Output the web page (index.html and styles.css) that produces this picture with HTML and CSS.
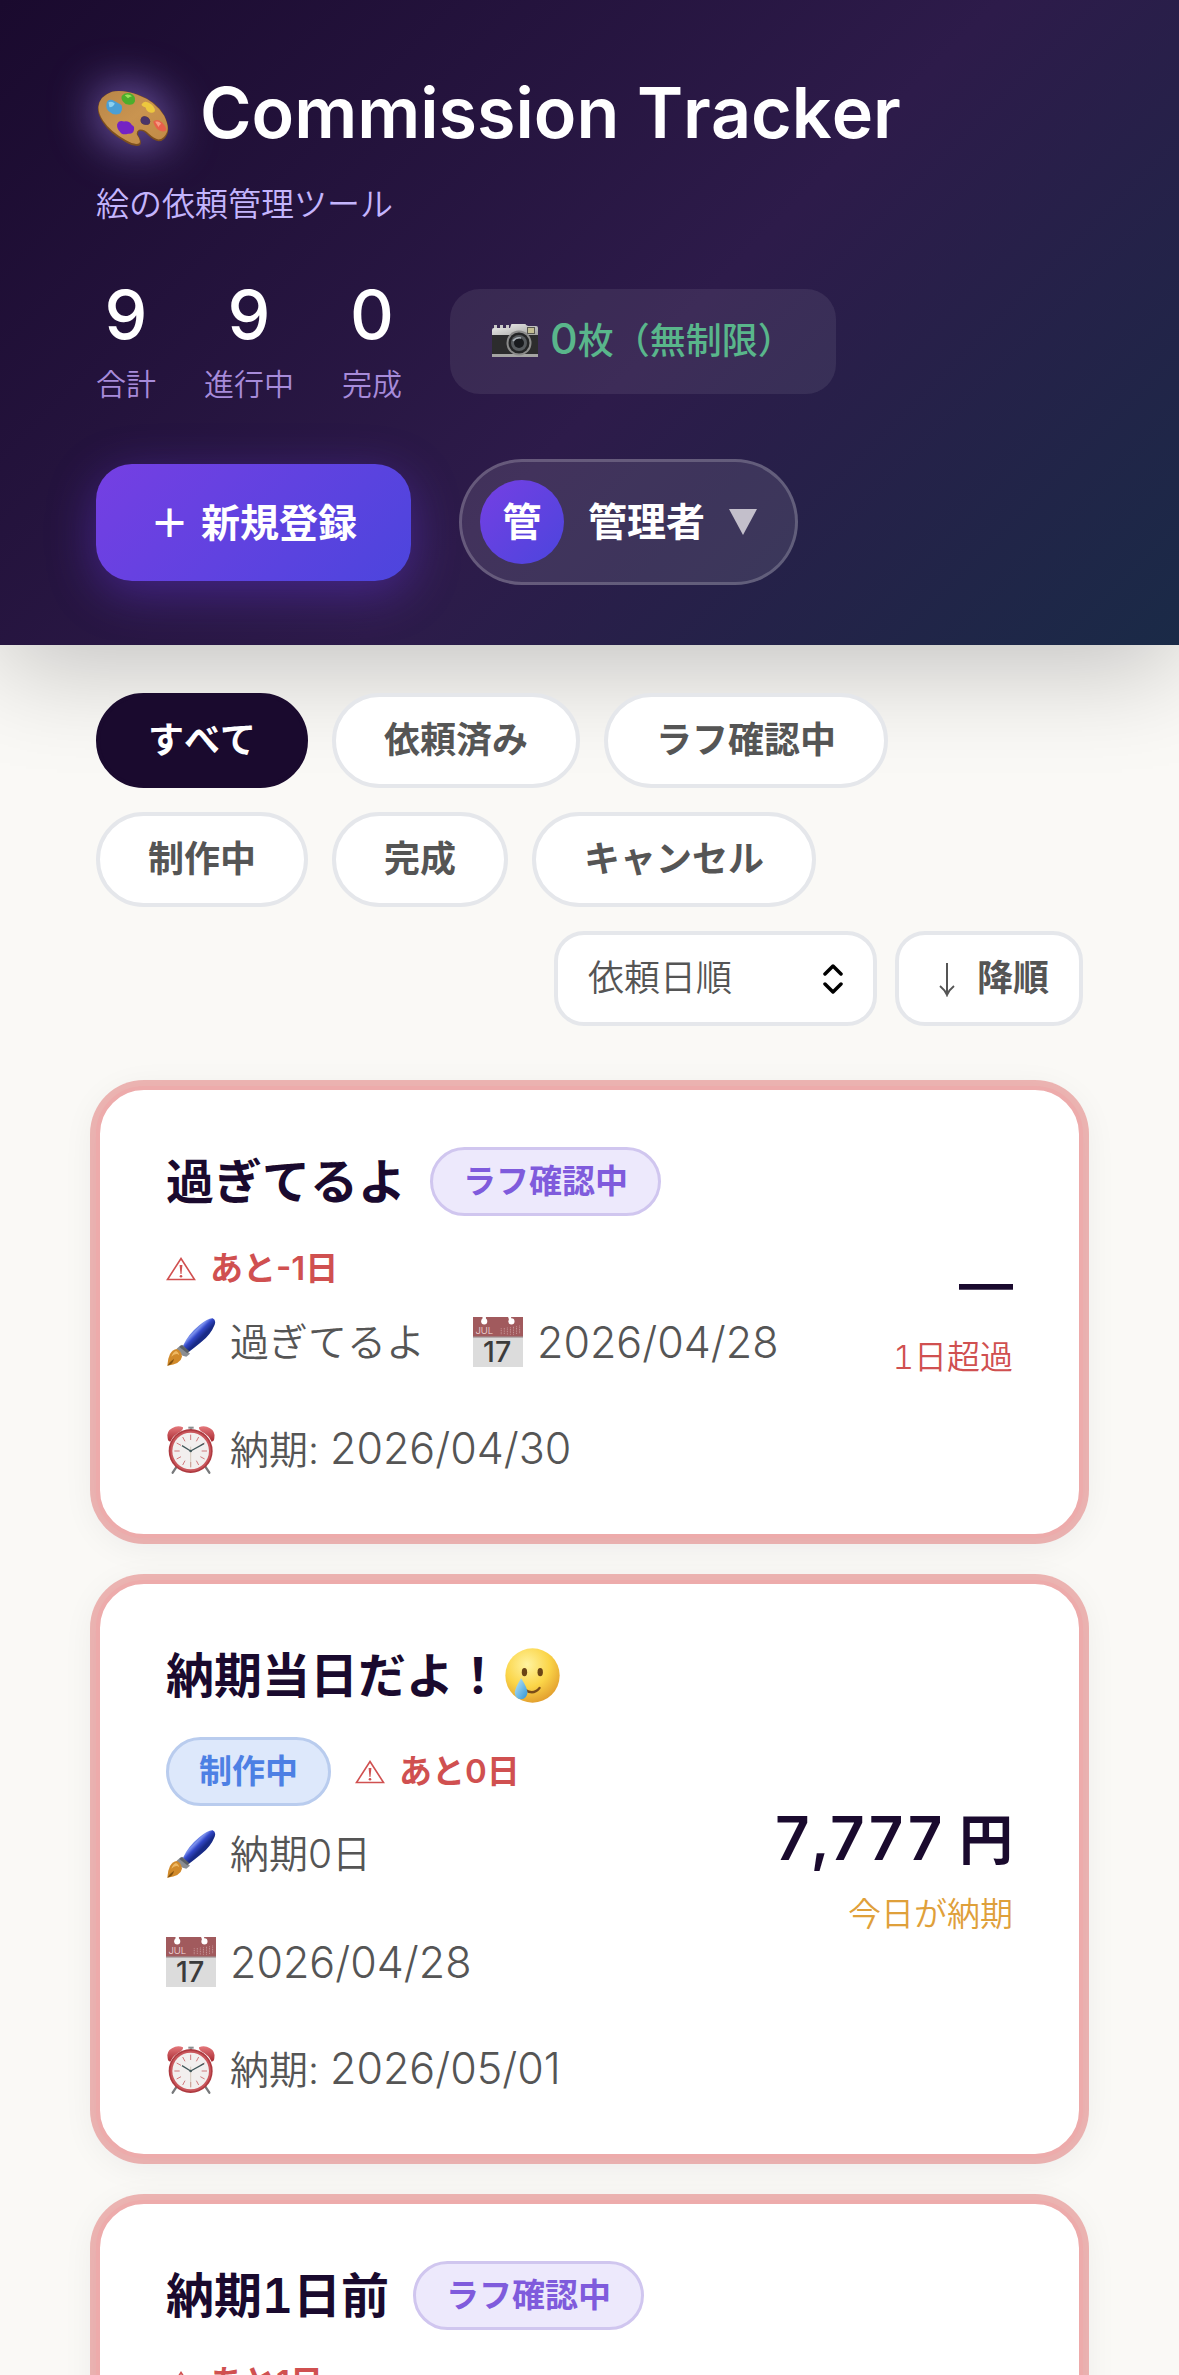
FILE: index.html
```html
<!DOCTYPE html>
<html lang="ja">
<head>
<meta charset="utf-8">
<meta name="viewport" content="width=device-width, initial-scale=1">
<title>Commission Tracker</title>
<link rel="stylesheet" href="styles.css">
</head>
<body>
<svg class="sprite" aria-hidden="true">
  <defs>
    <linearGradient id="handle" gradientUnits="userSpaceOnUse" x1="130" y1="262" x2="160" y2="292">
      <stop offset="0" stop-color="#1f3fb8"/><stop offset=".4" stop-color="#7d92ee"/><stop offset=".65" stop-color="#3247c8"/><stop offset="1" stop-color="#182a86"/>
    </linearGradient>
    <linearGradient id="bell" x1="0" y1="0" x2="0" y2="1">
      <stop offset="0" stop-color="#e4777b"/><stop offset="1" stop-color="#a82a31"/>
    </linearGradient>
    <linearGradient id="wood" x1="0" y1="0" x2="1" y2="1">
      <stop offset="0" stop-color="#b98648"/><stop offset=".5" stop-color="#c99450"/><stop offset="1" stop-color="#c08a45"/>
    </linearGradient>
    <linearGradient id="chrome" x1="0" y1="0" x2="1" y2="1">
      <stop offset="0" stop-color="#f2f2f0"/><stop offset="1" stop-color="#9a9a98"/>
    </linearGradient>
    <radialGradient id="face" cx=".4" cy=".3" r=".75">
      <stop offset="0" stop-color="#fff3a0"/><stop offset=".55" stop-color="#fbd548"/><stop offset="1" stop-color="#e09a2c"/>
    </radialGradient>
    <linearGradient id="tear" x1="0" y1="0" x2="1" y2="1">
      <stop offset="0" stop-color="#bfe9fb"/><stop offset="1" stop-color="#2f94d6"/>
    </linearGradient>
  </defs>
  <symbol id="i-brush" viewBox="50 235 150 150">
    <path d="M101 321Q118 286 150 260Q176 238 190 239Q201 244 196 258Q184 288 155 311Q132 330 118 340Z" fill="url(#handle)"/>
    <path d="M94 320L122 345L111 354Q100 352 90 345Q82 337 82 330Z" fill="#8a8d92"/>
    <path d="M98 318L120 338L114 344L90 325Z" fill="#5d6166"/>
    <path d="M82 331Q96 336 98 354Q94 376 54 381Q55 360 62 346Q70 333 82 331Z" fill="#d18a2a"/>
    <path d="M80 337Q70 341 66 354Q80 340 90 350Q86 338 80 337Z" fill="#eeb863"/>
    <path d="M54 381Q64 366 74 360Q72 376 54 381Z" fill="#86530f"/>
  </symbol>
  <symbol id="i-sheet" viewBox="0 0 147 147">
    <path d="M0 0H147V147H0Z" fill="#dcdcdc"/>
    <path d="M0 0H147V58H0Z" fill="#a15a5d"/>
    <path d="M0 57H147V60H0Z" fill="#8f7f80"/>
    <circle cx="33" cy="13" r="9" fill="#fff"/><path d="M28 0H38V10H28Z" fill="#fff"/>
    <circle cx="113" cy="13" r="9" fill="#fff"/><path d="M103 0H112V10H107Z" fill="#fff"/>
    <path d="M83 33V52M92 32V52M101 31V52M110 30V52M119 29V52M128 27V52M137 25V50" stroke="#c39294" stroke-width="3" stroke-dasharray="3 2" fill="none"/>
  </symbol>
  <symbol id="i-clock" viewBox="50 560 150 150">
    <path d="M84 682L70 703M166 682L180 703" stroke="#77797b" stroke-width="7" stroke-linecap="round"/>
    <path d="M55 600Q50 580 68 570Q84 560 101 567Q103 574 95 579Q72 590 63 610Q56 610 55 600Z" fill="url(#bell)"/>
    <path d="M195 600Q199 580 182 570Q166 560 149 567Q147 574 155 579Q178 590 187 610Q194 610 195 600Z" fill="url(#bell)"/>
    <path d="M117 565H133V571H117Z" fill="#8b8d8f"/><path d="M122 570H128V577H122Z" fill="#8b8d8f"/>
    <circle cx="124" cy="638" r="66" fill="#ae3a40"/>
    <circle cx="124" cy="638" r="61" fill="#c9565b"/>
    <circle cx="124" cy="638" r="55" fill="#f2efee"/>
    <g stroke="#d0797c" stroke-width="3"><path d="M124 589V605M124 671V687M75 638H91M157 638H173M100 596L107 609M148 596L141 609M82 614L95 621M166 614L153 621M82 662L95 655M166 662L153 655M100 680L107 667M148 680L141 667"/></g>
    <path d="M124 686V625" stroke="#c8b7a6" stroke-width="2"/>
    <path d="M124 638L98 622M124 638L164 616" stroke="#41585a" stroke-width="4"/>
    <circle cx="124" cy="638" r="4" fill="#41585a"/>
  </symbol>
  <symbol id="i-warning" viewBox="0 0 30 24">
    <path d="M15 1.500L28.500 22.500H1.500Z" fill="none" stroke="currentColor" stroke-width="1.600"/>
    <path d="M13.600 8H16.400L15.500 17H14.500Z" fill="currentColor"/><circle cx="15" cy="19.300" r="1.300" fill="currentColor"/>
  </symbol>
</svg>

<header class="site-header">
  <h1 class="brand">
    <svg class="brand-icon" viewBox="80 85 222 175" aria-hidden="true">
      <path d="M85 142Q87 108 126 93Q160 86 204 101Q262 121 286 166Q302 200 295 220Q286 243 268 243Q252 240 236 224Q224 210 211 211Q204 214 206 224Q220 246 212 255Q196 261 168 245Q120 218 100 186Q84 162 85 142Z" fill="#7d4f1e"/>
      <path fill-rule="evenodd" d="M87 138Q89 107 128 93Q162 87 204 102Q260 122 285 166Q300 198 294 214Q285 237 268 237Q254 234 238 219Q224 205 209 208Q200 213 203 223Q216 241 210 249Q196 255 170 240Q122 213 101 181Q86 158 87 138ZM214 178Q213 191 228 193Q243 194 243 182Q240 169 226 167Q215 168 214 178Z" fill="url(#wood)"/>
      <path d="M214 178Q213 191 228 193Q243 194 243 182Q240 169 226 167Q215 168 214 178Z" fill="#4a3568"/>
      <path d="M157 106Q166 94 182 98Q200 104 197 122Q192 135 176 132Q168 132 163 125Q154 116 157 106Z" fill="#4cae2c"/>
      <path d="M166 104Q178 98 188 107Q180 108 176 113Z" fill="#9ae25a"/>
      <path d="M111 130Q113 115 129 118Q141 124 156 133Q162 146 152 159Q134 166 122 155Q108 146 111 130Z" fill="#4b9fd4"/>
      <path d="M117 125Q128 120 136 129Q132 140 120 140Z" fill="#8bd0f0"/>
      <path d="M217 131Q224 119 237 126Q258 136 257 152Q250 160 237 154Q230 148 229 141Q216 137 217 131Z" fill="#edc83e"/>
      <path d="M143 192Q148 178 164 183Q180 180 188 194Q196 196 194 208Q192 222 176 220Q158 226 151 213Q142 204 143 192Z" fill="#7423c4"/>
      <path d="M252 184Q262 172 278 185Q295 202 290 211Q280 216 268 209Q258 202 252 184Z" fill="#e8604b"/>
      <path d="M258 184Q268 180 276 190Q270 194 268 200Z" fill="#f79b84"/>
    </svg>
    <span>Commission Tracker</span>
  </h1>
  <p class="tagline">絵の依頼管理ツール</p>

  <div class="summary">
    <dl class="stats">
      <div class="stat"><dt>合計</dt><dd>9</dd></div>
      <div class="stat"><dt>進行中</dt><dd>9</dd></div>
      <div class="stat"><dt>完成</dt><dd>0</dd></div>
    </dl>
    <p class="quota">
      <svg class="quota-icon" viewBox="0 0 46 34" aria-hidden="true">
        <path d="M2 1H5V5H2ZM8 1H11V5H8ZM14 1H17V5H14Z" fill="#c9c9c7"/>
        <path d="M19 1Q19 0 20 0H33Q34 0 34 1L36 2H44Q46 2 46 4V13H0V6Q0 4 2 4H18Z" fill="url(#chrome)"/>
        <path d="M0 11H46V31H0Z" fill="#2c2c2d"/><path d="M0 30H46V33H0Z" fill="#a5a5a3"/>
        <path d="M35 3H43V10H35Z" fill="#57564e"/><path d="M36 4H42V9H36Z" fill="#c3bd92"/>
        <circle cx="27" cy="19" r="12.500" fill="#8b8b8a"/><circle cx="27" cy="19" r="10.500" fill="#242526"/>
        <circle cx="27" cy="19" r="8" fill="#565a5d"/><circle cx="27" cy="19" r="5" fill="#191b1e"/>
        <path d="M21 17Q24 13 29 14" stroke="#a9b0b5" stroke-width="1.500" fill="none"/>
      </svg>
      <span><span class="num">0</span>枚（無制限）</span>
    </p>
  </div>

  <div class="actions">
    <button class="btn-new" type="button">＋<span>新規登録</span></button>
    <button class="user-menu" type="button" aria-haspopup="menu">
      <span class="avatar">管</span>
      <span>管理者</span>
      <svg class="caret" viewBox="0 0 28 26" aria-hidden="true"><path d="M0 0H28L14 26Z" fill="currentColor"/></svg>
    </button>
  </div>
</header>

<main class="content">
  <div class="toolbar">
    <div class="filters" role="group" aria-label="ステータス">
      <button class="filter is-active" type="button">すべて</button>
      <button class="filter" type="button">依頼済み</button>
      <button class="filter" type="button">ラフ確認中</button>
      <button class="filter" type="button">制作中</button>
      <button class="filter" type="button">完成</button>
      <button class="filter" type="button">キャンセル</button>
    </div>
    <div class="sorting">
      <div class="select-wrap">
        <select class="sort-select" aria-label="並び順">
          <option>依頼日順</option>
          <option>納期順</option>
          <option>金額順</option>
        </select>
        <svg class="select-icon" viewBox="0 0 22 30" aria-hidden="true"><path d="M3 10L11 2L19 10M3 20L11 28L19 20" fill="none" stroke="#000" stroke-width="3.500" stroke-linecap="round" stroke-linejoin="round"/></svg>
      </div>
      <button class="sort-dir" type="button">
        <svg class="sort-arrow" viewBox="0 0 36 36" aria-hidden="true"><path d="M18 2V33M11 25Q16 29 18 34Q20 29 25 25" fill="none" stroke="currentColor" stroke-width="2"/></svg>
        降順
      </button>
    </div>
  </div>

  <div class="cards">
    <article class="card">
      <div class="card-main">
        <div class="card-head">
          <h2 class="card-title">過ぎてるよ</h2>
          <span class="badge badge-rough">ラフ確認中</span>
          <span class="deadline"><svg class="warn" aria-hidden="true"><use href="#i-warning"/></svg>あと-1日</span>
        </div>
        <ul class="meta">
          <li><svg class="meta-icon" aria-hidden="true"><use href="#i-brush"/></svg><span>過ぎてるよ</span></li>
          <li><svg class="meta-icon" viewBox="0 0 147 147" aria-hidden="true"><use href="#i-sheet"/><text class="cal-month" x="7" y="50">JUL</text><text class="cal-day" x="71" y="132">17</text></svg><time class="num" datetime="2026-04-28">2026/04/28</time></li>
          <li><svg class="meta-icon" aria-hidden="true"><use href="#i-clock"/></svg><span>納期: <time class="num" datetime="2026-04-30">2026/04/30</time></span></li>
        </ul>
      </div>
      <div class="card-side">
        <p class="amount">—</p>
        <p class="remain remain-over">1日超過</p>
      </div>
    </article>

    <article class="card">
      <div class="card-main">
        <div class="card-head">
          <h2 class="card-title">納期当日だよ！<svg class="face" viewBox="1067 31 164 164" aria-hidden="true">
            <circle cx="1149" cy="113" r="81" fill="url(#face)"/>
            <ellipse cx="1125" cy="103" rx="8" ry="12" fill="#6b4416"/><ellipse cx="1172" cy="103" rx="8" ry="12" fill="#6b4416"/>
            <path d="M1128 156Q1152 172 1170 150" fill="none" stroke="#7a4c18" stroke-width="7" stroke-linecap="round"/>
            <path d="M1115 121Q1134 150 1134 164Q1132 183 1115 184Q1097 183 1096 164Q1097 150 1115 121Z" fill="url(#tear)"/>
          </svg></h2>
          <span class="badge badge-work">制作中</span>
          <span class="deadline"><svg class="warn" aria-hidden="true"><use href="#i-warning"/></svg>あと0日</span>
        </div>
        <ul class="meta">
          <li><svg class="meta-icon" aria-hidden="true"><use href="#i-brush"/></svg><span>納期0日</span></li>
          <li><svg class="meta-icon" viewBox="0 0 147 147" aria-hidden="true"><use href="#i-sheet"/><text class="cal-month" x="7" y="50">JUL</text><text class="cal-day" x="71" y="132">17</text></svg><time class="num" datetime="2026-04-28">2026/04/28</time></li>
          <li><svg class="meta-icon" aria-hidden="true"><use href="#i-clock"/></svg><span>納期: <time class="num" datetime="2026-05-01">2026/05/01</time></span></li>
        </ul>
      </div>
      <div class="card-side">
        <p class="amount"><span class="figure">7,777</span> 円</p>
        <p class="remain remain-today">今日が納期</p>
      </div>
    </article>

    <article class="card">
      <div class="card-main">
        <div class="card-head">
          <h2 class="card-title">納期1日前</h2>
          <span class="badge badge-rough">ラフ確認中</span>
          <span class="deadline"><svg class="warn" aria-hidden="true"><use href="#i-warning"/></svg>あと1日</span>
        </div>
        <ul class="meta">
          <li><svg class="meta-icon" aria-hidden="true"><use href="#i-brush"/></svg><span>納期1日前</span></li>
          <li><svg class="meta-icon" viewBox="0 0 147 147" aria-hidden="true"><use href="#i-sheet"/><text class="cal-month" x="7" y="50">JUL</text><text class="cal-day" x="71" y="132">17</text></svg><time class="num" datetime="2026-04-28">2026/04/28</time></li>
          <li><svg class="meta-icon" aria-hidden="true"><use href="#i-clock"/></svg><span>納期: <time class="num" datetime="2026-05-02">2026/05/02</time></span></li>
        </ul>
      </div>
      <div class="card-side">
        <p class="amount"><span class="figure">7,777</span> 円</p>
        <p class="remain remain-today">あと1日</p>
      </div>
    </article>
  </div>
</main>
</body>
</html>
```

FILE: styles.css
```css
* {
  box-sizing: border-box;
}

html {
  scrollbar-width: none;
}

body {
  margin: 0;
  background: #faf9f6;
  color: #555;
  font-family: "Inter", "Noto Sans CJK JP", sans-serif;
  font-size: 39px;
  font-weight: 350;
  line-height: 60px;
  font-kerning: none;
}

h1, h2, p, ul, dl, dd {
  margin: 0;
  padding: 0;
}

ul {
  list-style: none;
}

button, select {
  margin: 0;
  font: inherit;
  font-kerning: none;
  color: inherit;
  cursor: pointer;
}

.sprite {
  position: absolute;
  width: 0;
  height: 0;
}

/* Header */

.site-header {
  position: relative;
  padding: 62px 96px 60px;
  background: linear-gradient(135deg, #1a0a2e 0%, #2d1b4a 55%, #1a2a47 100%);
  box-shadow: 0 24px 96px rgba(0, 0, 0, 0.22);
  color: #fff;
}

.brand {
  display: flex;
  align-items: center;
  gap: 30px;
  font-size: 70px;
  font-weight: 600;
  line-height: 102px;
}

.brand-icon {
  flex: none;
  width: 74px;
  height: 58px;
  margin-top: 10px;
  filter: drop-shadow(0 0 24px rgba(167, 139, 250, 0.8));
}

.tagline {
  margin-top: 15px;
  color: #c4b5fd;
  font-size: 33px;
  line-height: 51px;
}

.summary {
  display: flex;
  flex-wrap: wrap;
  align-items: center;
  gap: 48px;
  margin-top: 45px;
}

.stats {
  display: flex;
  gap: 48px;
}

.stat {
  display: flex;
  flex-direction: column-reverse;
  gap: 9px;
  text-align: center;
}

.stat dd {
  font-size: 68px;
  font-weight: 500;
  line-height: 78px;
}

.stat dt {
  color: #a78bda;
  font-size: 30px;
  line-height: 45px;
}

.quota {
  display: flex;
  align-items: center;
  gap: 12px;
  padding: 24px 42px;
  border-radius: 30px;
  background: rgba(255, 255, 255, 0.08);
  color: #59b68b;
  font-size: 36px;
  font-weight: 500;
  line-height: 57px;
}

.quota-icon {
  width: 46px;
  height: 34px;
}

.actions {
  display: flex;
  flex-wrap: wrap;
  align-items: center;
  gap: 48px;
  margin-top: 52px;
}

.btn-new {
  display: flex;
  gap: 12px;
  padding: 30px 54px;
  border: 0;
  border-radius: 36px;
  background: linear-gradient(135deg, #753fe3 0%, #4c45dd 100%);
  box-shadow: 0 12px 48px rgba(109, 58, 237, 0.4);
  color: #fff;
  font-weight: 700;
  line-height: 57px;
}

.user-menu {
  display: flex;
  align-items: center;
  gap: 24px;
  padding: 18px 38px 18px 18px;
  border: 3px solid rgba(255, 255, 255, 0.2);
  border-radius: 64px;
  background: rgba(255, 255, 255, 0.1);
  color: #fff;
  font-weight: 700;
}

.avatar {
  width: 84px;
  height: 84px;
  border-radius: 50%;
  background: linear-gradient(135deg, #753fe3 0%, #4c45dd 100%);
  line-height: 84px;
  text-align: center;
}

.caret {
  width: 28px;
  height: 26px;
  color: #c3bfcb;
}

/* Filters and sorting */

.content {
  padding: 48px 96px;
}

.toolbar {
  display: flex;
  flex-wrap: wrap;
  justify-content: flex-end;
  gap: 24px;
  position: relative;
  font-size: 36px;
  line-height: 57px;
}

.filters {
  display: flex;
  flex: 1 1 100%;
  flex-wrap: wrap;
  gap: 24px;
}

.filter {
  padding: 15px 48px;
  border: 4px solid #e5e7eb;
  border-radius: 48px;
  background: #fff;
  font-weight: 600;
}

.filter.is-active {
  border-color: #1a0a2e;
  background: #1a0a2e;
  color: #fff;
}

.sorting {
  display: flex;
  gap: 18px;
}

.select-wrap {
  position: relative;
}

.sort-select {
  width: 323px;
  padding: 15px 30px;
  border: 4px solid #e5e7eb;
  border-radius: 30px;
  background: #fff;
  appearance: none;
}

.select-icon {
  position: absolute;
  top: 33px;
  right: 33px;
  width: 22px;
  height: 30px;
  pointer-events: none;
}

.sort-dir {
  display: flex;
  align-items: center;
  gap: 12px;
  padding: 15px 30px;
  border: 4px solid #e5e7eb;
  border-radius: 30px;
  background: #fff;
  font-weight: 600;
}

.sort-arrow {
  width: 36px;
  height: 36px;
}

/* Commission cards */

.cards {
  display: grid;
  gap: 42px;
  margin-top: 60px;
}

.card {
  display: flex;
  align-items: center;
  gap: 60px;
  padding: 54px 66px;
  border: 4px solid #edabab;
  border-radius: 48px;
  background: #fff;
  box-shadow: 0 0 0 6px rgba(220, 80, 80, 0.4), 0 6px 36px rgba(26, 10, 46, 0.07);
}

.card-main {
  flex: 1;
  min-width: 0;
}

.card-head {
  display: flex;
  flex-wrap: wrap;
  align-items: center;
  gap: 24px;
}

.card-title {
  display: flex;
  align-items: center;
  gap: 3px;
  color: #1a0a2e;
  font-size: 48px;
  font-weight: 600;
  font-variant-numeric: tabular-nums;
  line-height: 75px;
}

.face {
  width: 55px;
  height: 55px;
}

.badge {
  padding: 6px 30px;
  border: 3px solid;
  border-radius: 36px;
  font-size: 33px;
  font-weight: 600;
  line-height: 51px;
}

.badge-rough {
  border-color: #d0c6ef;
  background: #ede9fc;
  color: #7f5bdc;
}

.badge-work {
  border-color: #b9ccee;
  background: #dde8fb;
  color: #4d80e4;
}

.deadline {
  display: flex;
  align-items: center;
  gap: 14px;
  color: #d05050;
  font-size: 33px;
  font-weight: 600;
  line-height: 51px;
}

.warn {
  width: 30px;
  height: 24px;
}

.meta {
  display: flex;
  flex-wrap: wrap;
  gap: 48px;
  margin-top: 18px;
}

.meta li {
  display: flex;
  align-items: center;
  gap: 14px;
  min-height: 60px;
}

.meta-icon {
  flex: none;
  width: 50px;
  height: 50px;
}

.cal-month {
  fill: #f3dede;
  font-size: 28px;
}

.cal-day {
  fill: #3b3b3b;
  font-size: 84px;
  font-weight: 500;
  text-anchor: middle;
}

.num {
  font-size: 43px;
  line-height: 1;
}

.card-side {
  flex: none;
  text-align: right;
}

.amount {
  color: #1a0a2e;
  font-size: 54px;
  font-weight: 600;
  font-variant-numeric: tabular-nums;
  line-height: 84px;
}

.figure {
  font-size: 60px;
  line-height: 1;
}

.remain {
  margin-top: 6px;
  font-size: 33px;
  font-variant-numeric: tabular-nums;
  line-height: 51px;
}

.remain-over {
  color: #d05050;
}

.remain-today {
  color: #dfa03a;
}
```
